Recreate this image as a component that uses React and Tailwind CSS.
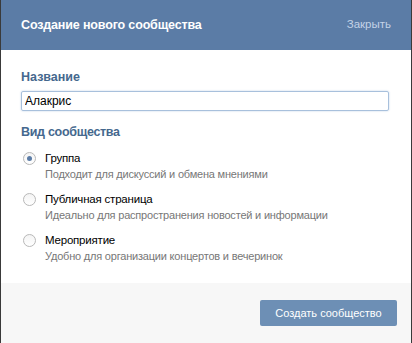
export default function App() {
  const options = [
    { title: "Группа", desc: "Подходит для дискуссий и обмена мнениями", checked: true },
    { title: "Публичная страница", desc: "Идеально для распространения новостей и информации" },
    { title: "Мероприятие", desc: "Удобно для организации концертов и вечеринок" },
  ];
  return (
    <div className="w-[412px] h-[343px] bg-[#3a3a3a] px-[1px] overflow-hidden" style={{ fontFamily: '"Liberation Sans", Arial, sans-serif' }}>
      <div className="h-full flex flex-col bg-white">
        <div className="h-[50px] shrink-0 bg-[#5b7ca6] flex items-center justify-between pl-[20px] pr-[20px]">
          <div className="text-white font-bold text-[12.5px] tracking-[-0.15px]">Создание нового сообщества</div>
          <div className="text-[#c4d3e6] text-[11.5px]">Закрыть</div>
        </div>
        <div className="flex-1 px-[20px] pt-[19px]">
          <div className="text-[#45688e] font-bold text-[12.5px] leading-[16px]">Название</div>
          <input
            readOnly
            value="Алакрис"
            className="mt-[6px] w-[368px] h-[20px] border border-[#a8c0dc] rounded-[2px] px-[3px] text-[12px] text-black outline-none shadow-[0_0_2px_#b9cde4]"
          />
          <div className="mt-[12px] text-[#45688e] font-bold text-[12.5px] leading-[16px] tracking-[-0.3px]">Вид сообщества</div>
          <div className="mt-[11px] flex flex-col gap-[10px] pl-[2px]">
            {options.map((o) => (
              <div key={o.title} className="flex items-start">
                <div className="w-[13px] h-[13px] mt-[1px] rounded-full border border-[#b8b8b8] flex items-center justify-center bg-[linear-gradient(#f4f4f4,#ffffff)]">
                  {o.checked && <div className="w-[5px] h-[5px] rounded-full bg-[#5b7ca6]" />}
                </div>
                <div className="ml-[9px] tracking-[-0.2px]">
                  <div className="text-[11.5px] leading-[15px] text-black">{o.title}</div>
                  <div className="text-[11px] leading-[15px] text-[#777] mt-[1px]">{o.desc}</div>
                </div>
              </div>
            ))}
          </div>
        </div>
        <div className="h-[60px] shrink-0 bg-[#f7f7f7] flex items-center justify-end pr-[14px]">
          <button className="w-[137px] h-[26px] rounded-[2px] bg-[#6d8fb5] text-white text-[11px]">Создать сообщество</button>
        </div>
      </div>
    </div>
  );
}
